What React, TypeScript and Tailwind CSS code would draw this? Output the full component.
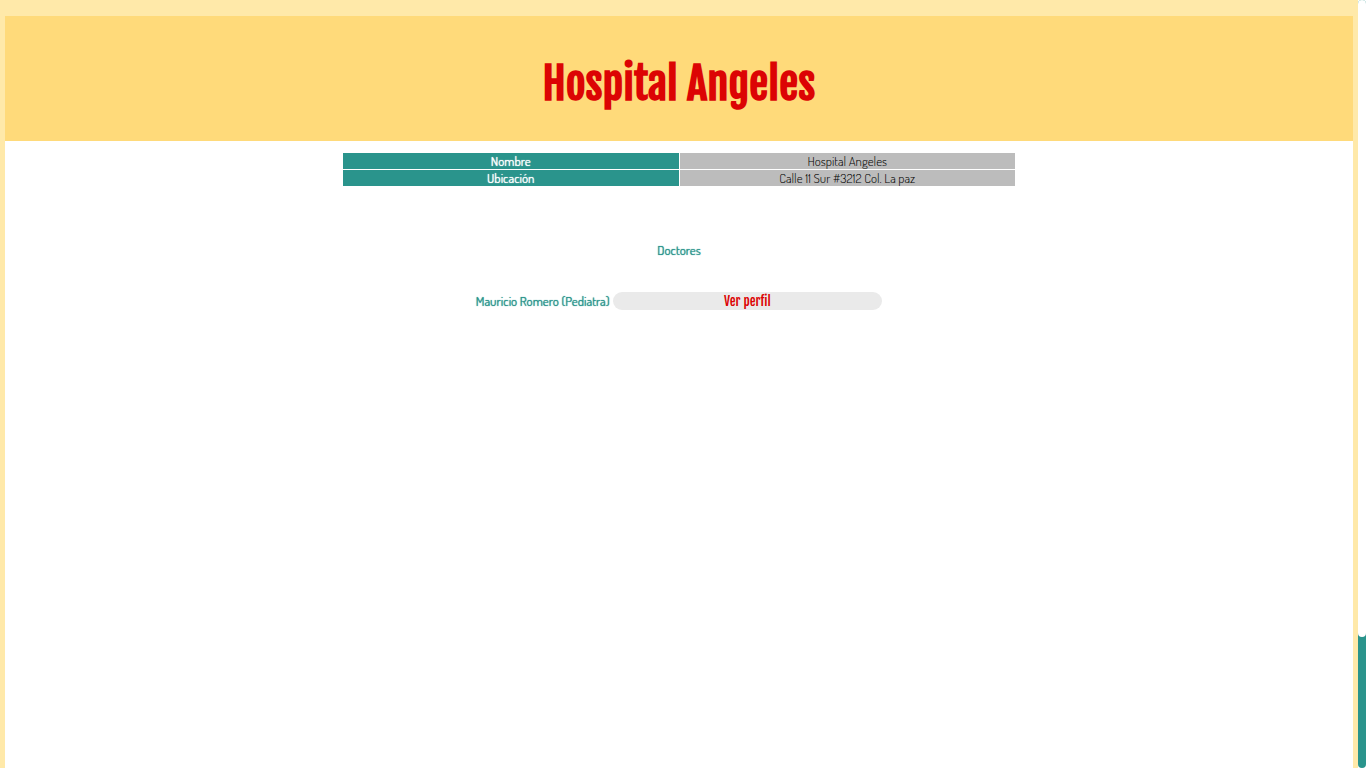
const hospital = [
  { label: 'Nombre', value: 'Hospital Angeles' },
  { label: 'Ubicación', value: 'Calle 11 Sur #3212 Col. La paz' },
];

const doctors = [{ name: 'Mauricio Romero', specialty: 'Pediatra' }];

function HospitalTable() {
  return (
    <table className="mx-auto w-1/2 table-fixed border-separate border-spacing-px text-center text-[13px] leading-4">
      <tbody>
        {hospital.map((row) => (
          <tr key={row.label}>
            <th scope="row" className="bg-[#2a948c] p-0 font-normal text-white text-shadow-[0_0_1px_currentColor]">
              {row.label}
            </th>
            <td className="bg-[#bcbcbc] p-0 font-light text-black">{row.value}</td>
          </tr>
        ))}
      </tbody>
    </table>
  );
}

function Scrollbar() {
  return (
    <div aria-hidden="true" className="flex w-2 shrink-0 flex-col bg-white">
      <div className="grow rounded bg-[#2a948c]">
        <div className="h-[83vh] rounded bg-white" />
      </div>
    </div>
  );
}

export default function App() {
  return (
    <div className="flex min-h-screen bg-[#ffe9a9] font-['Dosis','Lato',sans-serif]">
      <div className="flex grow flex-col px-[5px] pt-4">
        <header className="flex h-[125px] items-center justify-center bg-[#ffda7a] pt-[11px]">
          <h1 className="font-['Fjalla_One','Roboto',sans-serif] text-[43px] leading-none font-bold text-[#dc0404]">
            Hospital Angeles
          </h1>
        </header>
        <main className="grow bg-white pt-[11px]">
          <HospitalTable />
          <h2 className="mt-[55px] text-center text-[13px] leading-4 font-normal text-[#2a948c] text-shadow-[0_0_1px_currentColor]">
            Doctores
          </h2>
          <ul className="mt-[34px]">
            {doctors.map((doctor) => (
              <li key={doctor.name} className="flex items-center justify-center gap-[3px]">
                <span className="text-[13px] leading-4 font-normal text-[#2a948c] text-shadow-[0_0_1px_currentColor]">
                  {doctor.name} ({doctor.specialty})
                </span>
                <button
                  type="button"
                  className="h-[18px] w-1/5 cursor-pointer rounded-full bg-[#eaeaea] font-['Fjalla_One','Roboto',sans-serif] text-[13px] leading-4 text-[#dc0404]"
                >
                  Ver perfil
                </button>
              </li>
            ))}
          </ul>
        </main>
      </div>
      <Scrollbar />
    </div>
  );
}
